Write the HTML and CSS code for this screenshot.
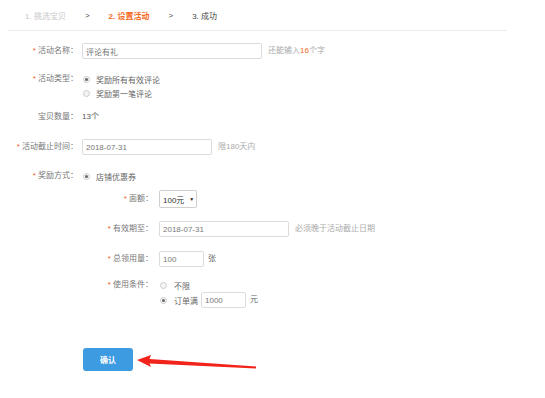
FILE: index.html
```html
<!DOCTYPE html>
<html lang="zh-CN">
<head>
    <meta charset="UTF-8">
    <title>设置活动</title>
    <link rel="stylesheet" href="styles.css">
</head>
<body>
    <div class="steps">
        <span class="step done">1. 挑选宝贝</span>
        <span class="arrow-sep">&gt;</span>
        <span class="step current">2. 设置活动</span>
        <span class="arrow-sep">&gt;</span>
        <span class="step">3. 成功</span>
    </div>

    <div class="form">
        <div class="row row-name">
            <div class="label tall"><i>*</i> 活动名称：</div>
            <input class="text-input w-name" type="text" value="评论有礼">
            <span class="hint">还能输入<em>16</em>个字</span>
        </div>

        <div class="row row-type">
            <div class="label"><i>*</i> 活动类型：</div>
            <div class="radio-group">
                <div class="radio-line"><span class="dot on"></span>奖励所有有效评论</div>
                <div class="radio-line"><span class="dot"></span>奖励第一笔评论</div>
            </div>
        </div>

        <div class="row row-count">
            <div class="label">宝贝数量：</div>
            <div class="value">13个</div>
        </div>

        <div class="row row-date">
            <div class="label tall"><i>*</i> 活动截止时间：</div>
            <input class="text-input w-date" type="text" value="2018-07-31">
            <span class="hint">限180天内</span>
        </div>

        <div class="row row-reward">
            <div class="label"><i>*</i> 奖励方式：</div>
            <div class="radio-line"><span class="dot on"></span>店铺优惠券</div>
        </div>

        <div class="sub">
            <div class="row row-amount">
                <div class="label select-h"><i>*</i> 面额：</div>
                <div class="select">100元<span class="caret">▼</span></div>
            </div>

            <div class="row row-valid">
                <div class="label tall"><i>*</i> 有效期至：</div>
                <input class="text-input w-date" type="text" value="2018-07-31">
                <span class="hint">必须晚于活动截止日期</span>
            </div>

            <div class="row row-total">
                <div class="label tall"><i>*</i> 总领用量：</div>
                <input class="text-input w-small" type="text" value="100">
                <span class="unit">张</span>
            </div>

            <div class="row row-cond">
                <div class="label"><i>*</i> 使用条件：</div>
                <div class="radio-group">
                    <div class="radio-line narrow"><span class="dot"></span>不限</div>
                    <div class="radio-line narrow tall-line"><span class="dot on"></span>订单满
                        <input class="text-input w-small" type="text" value="1000">
                        <span class="unit">元</span>
                    </div>
                </div>
            </div>
        </div>

        <div class="row row-submit">
            <button class="btn-ok">确认</button>
            <svg class="pointer" width="122" height="18" viewBox="0 0 122 18">
                <polygon points="1,7 15,2 13.5,6 120,13.5 120,15.5 13.5,10.5 15,14" fill="#f2231a"/>
            </svg>
        </div>
    </div>
</body>
</html>
```

FILE: styles.css
```css
body {
    margin: 0;
    padding: 0;
    background: #fff;
    font-family: "Liberation Sans", "Noto Sans CJK SC", sans-serif;
    font-size: 8px;
    color: #777;
}

.steps {
    display: flex;
    align-items: center;
    gap: 19px;
    width: 482px;
    height: 30px;
    margin: 0 8px;
    padding-left: 17px;
    border-bottom: 1px solid #e9ecef;
    font-size: 8px;
}

.step {
    color: #444;
}

.step.done {
    color: #c8c8c8;
}

.step.current {
    color: #f56a1e;
    font-weight: bold;
}

.arrow-sep {
    color: #444;
}

.row {
    display: flex;
    align-items: flex-start;
}

.label {
    width: 78px;
    margin-right: 4px;
    text-align: right;
    line-height: 14px;
    color: #777;
    white-space: nowrap;
}

.label i {
    font-style: normal;
    color: #f2551e;
}

.label.tall {
    line-height: 16px;
}

.label.select-h {
    line-height: 18px;
}

.text-input {
    box-sizing: border-box;
    height: 16px;
    padding: 0 3px;
    border: 1px solid #dcdcdc;
    border-radius: 2px;
    font-family: inherit;
    font-size: 8px;
    color: #777;
    outline: none;
}

.w-name { width: 180px; }
.w-date { width: 130px; }
.w-small { width: 45px; }

.hint {
    margin-left: 6px;
    line-height: 16px;
    color: #aaa;
}

.hint em {
    font-style: normal;
    color: #f56a1e;
}

.unit {
    margin-left: 4px;
    line-height: 16px;
    color: #666;
}

.value {
    line-height: 14px;
    color: #555;
}

.radio-line {
    display: flex;
    align-items: center;
    height: 14px;
    color: #666;
    white-space: nowrap;
}

.radio-line.tall-line {
    height: 16px;
}

.dot {
    box-sizing: border-box;
    width: 7px;
    height: 7px;
    margin: 0 6px 0 1px;
    border: 1px solid #cdcdcd;
    border-radius: 50%;
    background: #f4f4f4;
    position: relative;
}

.dot.on::after {
    content: "";
    position: absolute;
    left: 1px;
    top: 1px;
    width: 3px;
    height: 3px;
    border-radius: 50%;
    background: #666;
}

.radio-line.narrow .dot {
    margin-right: 7px;
}

.radio-line .text-input {
    margin-left: 3px;
}

.row-name { margin-top: 12px; }
.row-type { margin-top: 13px; }
.row-count { margin-top: 10px; }
.row-date { margin-top: 15px; }
.row-reward { margin-top: 14px; }
.row-amount { margin-top: 7px; }
.row-valid { margin-top: 13px; }
.row-total { margin-top: 14px; }
.row-cond { margin-top: 11px; }

.sub .label {
    width: 153px;
    margin-right: 6px;
}

.select {
    box-sizing: border-box;
    display: flex;
    align-items: center;
    width: 38px;
    height: 18px;
    padding-left: 3px;
    border: 1px solid #cfcfcf;
    border-radius: 2px;
    color: #333;
    white-space: nowrap;
}

.caret {
    margin-left: 5px;
    font-size: 5px;
    color: #222;
}

.row-submit {
    margin-top: 40px;
    padding-left: 83px;
    align-items: center;
}

.btn-ok {
    width: 50px;
    height: 23px;
    border: none;
    border-radius: 3px;
    background: #3d9be2;
    color: #fff;
    font-family: inherit;
    font-size: 8px;
    font-weight: bold;
    cursor: pointer;
}

.pointer {
    margin-left: 3px;
    margin-top: 4px;
}
```
